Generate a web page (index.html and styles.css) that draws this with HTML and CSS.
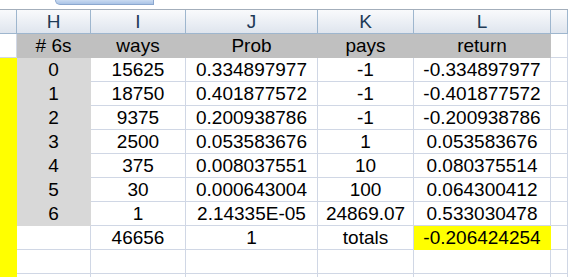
FILE: index.html
```html
<!DOCTYPE html>
<html lang="en">
<head>
    <meta charset="UTF-8">
    <title>Sheet - dice returns</title>
    <link rel="stylesheet" href="styles.css">
</head>
<body>
    <div class="sheet">
        <div class="topbar"><div class="tab"></div></div>

        <div class="row heads">
            <span></span><span>H</span><span>I</span><span>J</span><span>K</span><span>L</span><span></span>
        </div>

        <div class="row labels">
            <span class="blank"></span><span># 6s</span><span>ways</span><span>Prob</span><span>pays</span><span>return</span><span class="blank"></span>
        </div>

        <div class="row"><span class="ylw"></span><span class="key">0</span><span>15625</span><span>0.334897977</span><span>-1</span><span>-0.334897977</span><span></span></div>
        <div class="row"><span class="ylw"></span><span class="key">1</span><span>18750</span><span>0.401877572</span><span>-1</span><span>-0.401877572</span><span></span></div>
        <div class="row"><span class="ylw"></span><span class="key">2</span><span>9375</span><span>0.200938786</span><span>-1</span><span>-0.200938786</span><span></span></div>
        <div class="row"><span class="ylw"></span><span class="key">3</span><span>2500</span><span>0.053583676</span><span>1</span><span>0.053583676</span><span></span></div>
        <div class="row"><span class="ylw"></span><span class="key">4</span><span>375</span><span>0.008037551</span><span>10</span><span>0.080375514</span><span></span></div>
        <div class="row"><span class="ylw"></span><span class="key">5</span><span>30</span><span>0.000643004</span><span>100</span><span>0.064300412</span><span></span></div>
        <div class="row"><span class="ylw"></span><span class="key">6</span><span>1</span><span>2.14335E-05</span><span>24869.07</span><span>0.533030478</span><span></span></div>

        <!-- totals -->
        <div class="row"><span class="ylw"></span><span></span><span>46656</span><span>1</span><span>totals</span><span class="ylw">-0.206424254</span><span></span></div>
        <div class="row"><span class="ylw"></span><span></span><span></span><span></span><span></span><span></span><span></span></div>
        <div class="row"><span class="ylw"></span><span></span><span></span><span></span><span></span><span></span><span></span></div>
    </div>
</body>
</html>
```

FILE: styles.css
```css
body {
    margin: 0;
    background: #ffffff;
    font-family: "Liberation Sans", Arial, sans-serif;
    color: #000000;
}

.sheet {
    width: 568px;
    height: 277px;
    overflow: hidden;
}

.topbar {
    height: 9px;
    border-bottom: 1px solid #a3aebb;
}

.tab {
    margin-left: 55px;
    width: 97px;
    height: 4px;
    background: linear-gradient(#c9daf1, #a9c3e6);
    border: 1px solid #8ba7cf;
    border-top: none;
    border-radius: 0 0 0 10px;
}

.row {
    display: grid;
    grid-template-columns: 17px 74px 95px 132px 96px 137px 17px;
    height: 24px;
}

.row span {
    box-sizing: border-box;
    border-right: 1px solid #d0d7e5;
    border-bottom: 1px solid #d0d7e5;
    text-align: center;
    font-size: 19px;
    line-height: 23px;
    white-space: nowrap;
    overflow: hidden;
}

/* column letters */
.row.heads span {
    background: linear-gradient(#f9fafc, #dfe5ee);
    border-color: #9eb6ce;
    font-family: "Liberation Sans", sans-serif;
    font-size: 19px;
    color: #1e3a56;
    line-height: 23px;
}

.labels span {
    background: #c0c0c0;
    border-color: #c0c0c0;
}

.labels .blank {
    background: #ffffff;
    border-color: #d0d7e5;
}

.row .key {
    background: #d8d8d8;
    border-color: #d8d8d8;
}

.row .ylw {
    background: #ffff00;
    border-color: #ffff00;
}
```
